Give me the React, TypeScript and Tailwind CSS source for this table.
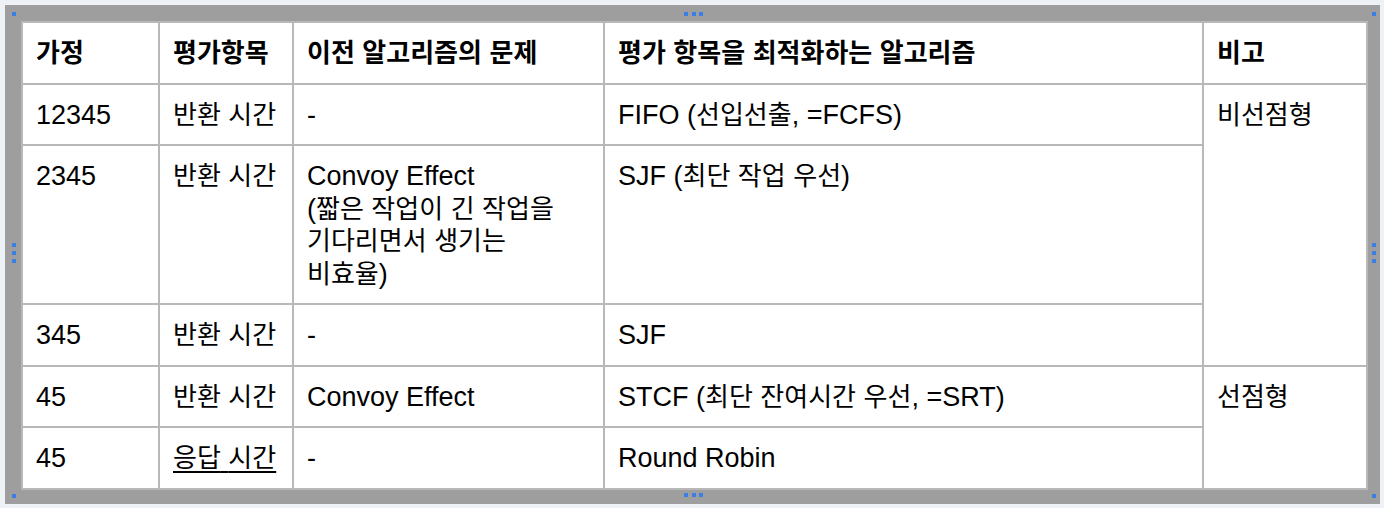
import type { ReactNode } from "react";

type Row = {
  premise: string;
  metric: string;
  underline?: boolean;
  problem: ReactNode;
  algo: string;
  note?: { text: string; span: number };
};

// hangul runs get their own size so they sit like the original's Korean face
function K({ t }: { t: string }) {
  return (
    <>
      {t.split(/([가-힣]+)/).map((s, i) =>
        /[가-힣]/.test(s) ? (
          <span key={i} className="text-[26px] leading-[28px]">
            {s}
          </span>
        ) : (
          s
        )
      )}
    </>
  );
}

const rows: Row[] = [
  {
    premise: "12345",
    metric: "반환 시간",
    problem: "-",
    algo: "FIFO (선입선출, =FCFS)",
    note: { text: "비선점형", span: 3 },
  },
  {
    premise: "2345",
    metric: "반환 시간",
    problem: (
      <>
        Convoy Effect
        <br />
        <K t="(짧은 작업이 긴 작업을" />
        <br />
        <K t="기다리면서 생기는" />
        <br />
        <K t="비효율)" />
      </>
    ),
    algo: "SJF (최단 작업 우선)",
  },
  { premise: "345", metric: "반환 시간", problem: "-", algo: "SJF" },
  {
    premise: "45",
    metric: "반환 시간",
    problem: "Convoy Effect",
    algo: "STCF (최단 잔여시간 우선, =SRT)",
    note: { text: "선점형", span: 2 },
  },
  {
    premise: "45",
    metric: "응답 시간",
    underline: true,
    problem: "-",
    algo: "Round Robin",
  },
];

const headers = ["가정", "평가항목", "이전 알고리즘의 문제", "평가 항목을 최적화하는 알고리즘", "비고"];

const cell =
  "border-2 border-[#b8b8b8] align-top px-[13px] pt-[14px] pb-[13px] text-left";

function Dot() {
  return <div className="w-1 h-1 bg-[#3b7ee6]" />;
}

export default function App() {
  return (
    <div className="w-[1384px] h-[508px] bg-[#eef1f6] pl-[5px] pt-[5px] font-['Liberation_Sans','Noto_Sans_CJK_KR',sans-serif]">
      <div className="relative w-[1375px] h-[499px] bg-[#9e9e9e] pl-[16px] pt-[16px]">
        <table className="table-fixed border-collapse bg-white text-black text-[27px] leading-[32.5px] w-[1345px]">
          <colgroup>
            <col className="w-[137px]" />
            <col className="w-[134px]" />
            <col className="w-[311px]" />
            <col className="w-[599px]" />
            <col className="w-[164px]" />
          </colgroup>
          <thead>
            <tr>
              {headers.map((h) => (
                <th key={h} className={`${cell} font-bold`}>
                  <K t={h} />
                </th>
              ))}
            </tr>
          </thead>
          <tbody>
            {rows.map((r, i) => (
              <tr key={i}>
                <td className={cell}>{r.premise}</td>
                <td className={cell}>
                  <span className={r.underline ? "underline decoration-[1.5px] underline-offset-[4px]" : ""}>
                    <K t={r.metric} />
                  </span>
                </td>
                <td className={cell}>
                  {typeof r.problem === "string" ? <K t={r.problem} /> : r.problem}
                </td>
                <td className={cell}>
                  <K t={r.algo} />
                </td>
                {r.note && (
                  <td className={cell} rowSpan={r.note.span}>
                    <K t={r.note.text} />
                  </td>
                )}
              </tr>
            ))}
          </tbody>
        </table>

        {/* selection handles */}
        <div className="absolute left-[7px] top-[7px]"><Dot /></div>
        <div className="absolute left-[1367px] top-[7px]"><Dot /></div>
        <div className="absolute left-[7px] top-[489px]"><Dot /></div>
        <div className="absolute left-[1367px] top-[489px]"><Dot /></div>
        <div className="absolute left-[679px] top-[7px] flex gap-[3.5px]"><Dot /><Dot /><Dot /></div>
        <div className="absolute left-[679px] top-[488px] flex gap-[3.5px]"><Dot /><Dot /><Dot /></div>
        <div className="absolute left-[7px] top-[238px] flex flex-col gap-1"><Dot /><Dot /><Dot /></div>
        <div className="absolute left-[1367px] top-[238px] flex flex-col gap-1"><Dot /><Dot /><Dot /></div>
      </div>
    </div>
  );
}
